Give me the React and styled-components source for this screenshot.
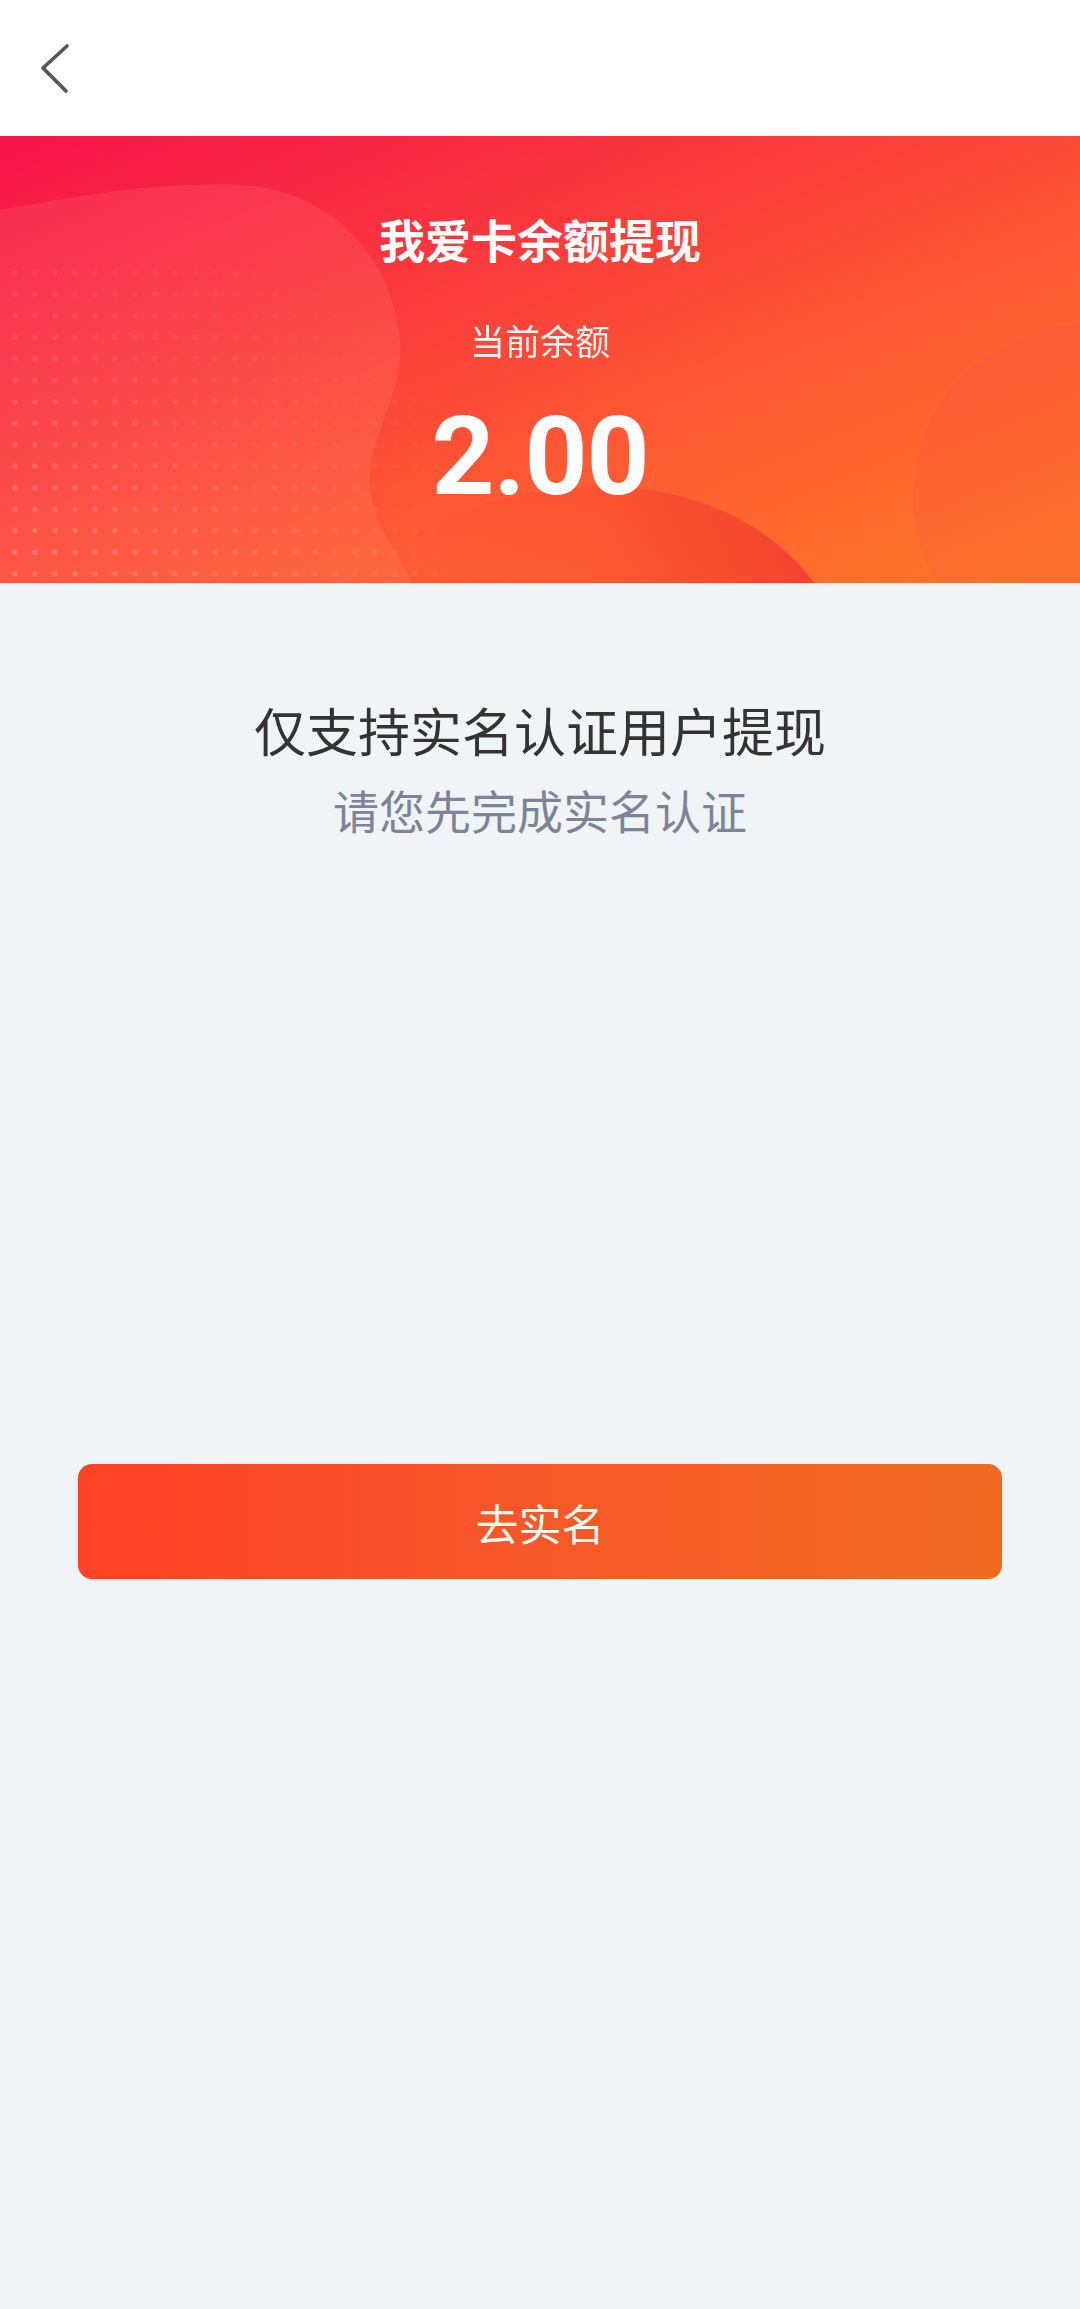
import React from "react";
import styled, { createGlobalStyle } from "styled-components";

const Global = createGlobalStyle`
  html, body { margin: 0; padding: 0; background: #f1f4f6; }
  body { font-family: "Noto Sans CJK SC", "Noto Sans", sans-serif; }
  * { box-sizing: border-box; }
`;

const Page = styled.div`
  width: 1080px;
  min-height: 2309px;
  background: #f1f4f6;
  display: flex;
  flex-direction: column;
`;

const TopBar = styled.header`
  height: 136px;
  background: #ffffff;
  display: flex;
  align-items: center;
  padding-left: 30px;
`;

const BackButton = styled.button`
  width: 60px;
  height: 80px;
  border: 0;
  padding: 0;
  background: transparent;
  display: flex;
  align-items: center;
  justify-content: center;
`;

const Banner = styled.section`
  position: relative;
  height: 447px;
  overflow: hidden;
  display: flex;
  flex-direction: column;
  align-items: center;
  padding-top: 72px;
  color: #ffffff;
`;

const BannerArt = styled.svg`
  position: absolute;
  inset: 0;
  width: 100%;
  height: 100%;
`;

const BannerTitle = styled.h1`
  position: relative;
  margin: 0;
  font-size: 46px;
  line-height: 60px;
  font-weight: 700;
  letter-spacing: 0;
`;

const BalanceLabel = styled.div`
  position: relative;
  margin-top: 47px;
  font-size: 35px;
  line-height: 50px;
  font-weight: 400;
  opacity: 0.95;
`;

const BalanceValue = styled.div`
  position: relative;
  margin-top: 32px;
  font-family: "Roboto", "Liberation Sans", sans-serif;
  font-size: 110px;
  line-height: 120px;
  font-weight: 700;
  letter-spacing: -1px;
`;

const Content = styled.main`
  display: flex;
  flex-direction: column;
  align-items: center;
  padding: 112px 78px 0;
`;

const Notice = styled.p`
  margin: 0;
  font-size: ${(p) => p.$size}px;
  line-height: ${(p) => p.$lh}px;
  color: ${(p) => p.$color};
  margin-top: ${(p) => p.$mt || 0}px;
`;

const PrimaryButton = styled.button`
  margin-top: 625px;
  width: 924px;
  height: 115px;
  border: 0;
  border-radius: 14px;
  background: linear-gradient(90deg, #ff4226 0%, #f8542a 40%, #f06a22 100%);
  color: #fffaf2;
  font-family: "Noto Sans CJK SC", "Noto Sans", sans-serif;
  font-size: 43px;
  font-weight: 400;
  display: flex;
  align-items: center;
  justify-content: center;
`;

function Chevron() {
  return (
    <svg width="60" height="80" viewBox="0 0 60 80">
      <polyline
        points="37,18 13,40 36,63"
        fill="none"
        stroke="#555555"
        strokeWidth="3.6"
        strokeLinecap="round"
        strokeLinejoin="round"
      />
    </svg>
  );
}

function Art() {
  return (
    <BannerArt viewBox="0 0 1080 447" preserveAspectRatio="none">
      <defs>
        <linearGradient id="bg" x1="0" y1="0" x2="316" y2="763" gradientUnits="userSpaceOnUse">
          <stop offset="0" stopColor="#f5134c" />
          <stop offset="0.3" stopColor="#f9333f" />
          <stop offset="0.6" stopColor="#fd5634" />
          <stop offset="1" stopColor="#ff7a27" />
        </linearGradient>
        <linearGradient id="blobL" x1="0" y1="0" x2="0.6" y2="1">
          <stop offset="0" stopColor="#ff5a78" stopOpacity="0.28" />
          <stop offset="1" stopColor="#ff8a6a" stopOpacity="0.22" />
        </linearGradient>
        <linearGradient id="blobM" x1="380" y1="0" x2="814" y2="0" gradientUnits="userSpaceOnUse">
          <stop offset="0" stopColor="#ef2a34" stopOpacity="0" />
          <stop offset="0.5" stopColor="#ef2a34" stopOpacity="0.2" />
          <stop offset="1" stopColor="#ef2a30" stopOpacity="0.65" />
        </linearGradient>
        <pattern id="dots" width="20" height="21.5" patternUnits="userSpaceOnUse" x="5" y="126">
          <circle cx="10" cy="10.75" r="2.7" fill="#ffffff" />
        </pattern>
        <linearGradient id="fade" x1="0" y1="1" x2="0.9" y2="0.2">
          <stop offset="0" stopColor="#fff" stopOpacity="0.24" />
          <stop offset="0.55" stopColor="#fff" stopOpacity="0.08" />
          <stop offset="1" stopColor="#fff" stopOpacity="0" />
        </linearGradient>
        <mask id="dotMask">
          <rect x="0" y="130" width="440" height="317" fill="url(#fade)" />
        </mask>
      </defs>
      <rect width="1080" height="447" fill="url(#bg)" />
      <circle cx="1085" cy="361" r="172" fill="#ea4a48" fillOpacity="0.16" />
      <path
        d="M380,447 C400,392 480,352 610,351 C710,352 780,400 814,447 Z"
        fill="url(#blobM)"
      />
      <path
        d="M0,74 C80,60 150,46 240,49 C330,53 392,120 400,205 C404,262 366,300 370,350 C374,398 404,420 412,447 L0,447 Z"
        fill="url(#blobL)"
      />
      <rect x="0" y="130" width="440" height="317" fill="url(#dots)" mask="url(#dotMask)" />
    </BannerArt>
  );
}

export default function App() {
  return (
    <>
      <Global />
      <Page>
        <TopBar>
          <BackButton aria-label="返回">
            <Chevron />
          </BackButton>
        </TopBar>
        <Banner>
          <Art />
          <BannerTitle>我爱卡余额提现</BannerTitle>
          <BalanceLabel>当前余额</BalanceLabel>
          <BalanceValue>2.00</BalanceValue>
        </Banner>
        <Content>
          <Notice $size={52} $lh={70} $color="#333333">仅支持实名认证用户提现</Notice>
          <Notice $size={46} $lh={60} $color="#7d8398" $mt={14}>请您先完成实名认证</Notice>
          <PrimaryButton>去实名</PrimaryButton>
        </Content>
      </Page>
    </>
  );
}
